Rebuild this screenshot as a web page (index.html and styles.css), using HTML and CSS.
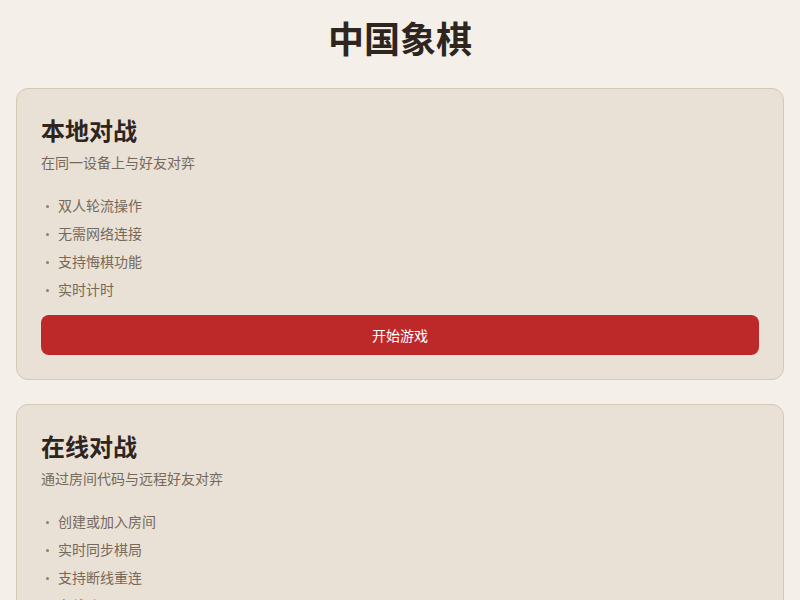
FILE: index.html
```html
<!DOCTYPE html>
<html lang="zh-CN">
<head>
    <meta charset="UTF-8">
    <meta name="viewport" content="width=device-width, initial-scale=1.0">
    <title>中国象棋</title>
    <link rel="stylesheet" href="styles.css">
</head>
<body>
    <div class="page">
        <h1 class="page-title">中国象棋</h1>

        <div class="mode-card">
            <h2 class="mode-title">本地对战</h2>
            <p class="mode-desc">在同一设备上与好友对弈</p>
            <ul class="mode-features">
                <li>双人轮流操作</li>
                <li>无需网络连接</li>
                <li>支持悔棋功能</li>
                <li>实时计时</li>
            </ul>
            <button class="start-button">开始游戏</button>
        </div>

        <div class="mode-card">
            <h2 class="mode-title">在线对战</h2>
            <p class="mode-desc">通过房间代码与远程好友对弈</p>
            <ul class="mode-features">
                <li>创建或加入房间</li>
                <li>实时同步棋局</li>
                <li>支持断线重连</li>
                <li>在线聊天</li>
            </ul>
            <button class="start-button">开始游戏</button>
        </div>
    </div>
</body>
</html>
```

FILE: styles.css
```css
body {
    margin: 0;
    padding: 0;
    font-family: "Noto Sans", "Noto Sans CJK SC", sans-serif;
    background-color: #f4f0e9;
    color: #2e251f;
}

.page {
    padding: 16px;
    display: flex;
    flex-direction: column;
    gap: 24px;
}

.page-title {
    margin: 0;
    font-size: 36px;
    line-height: 48px;
    font-weight: bold;
    text-align: center;
    color: #2e251f;
}

.mode-card {
    padding: 24px;
    background-color: #e9e1d5;
    border: 1px solid #d5c8b4;
    border-radius: 12px;
    display: flex;
    flex-direction: column;
}

.mode-title {
    margin: 0 0 3px;
    font-size: 24px;
    line-height: 36px;
    font-weight: bold;
    color: #2e251f;
}

.mode-desc {
    margin: 0;
    font-size: 14px;
    line-height: 21px;
    color: #76695c;
}

.mode-features {
    list-style: none;
    margin: 19px 0 0;
    padding: 0;
}

.mode-features li {
    position: relative;
    padding-left: 17px;
    font-size: 14px;
    line-height: 28px;
    color: #76695c;
}

.mode-features li::before {
    content: "";
    position: absolute;
    left: 5px;
    top: 13px;
    width: 3px;
    height: 3px;
    border-radius: 50%;
    background-color: #8c7e70;
}

.start-button {
    margin-top: 11px;
    height: 40px;
    border: none;
    border-radius: 8px;
    background-color: #bd2828;
    color: #fff;
    font-family: inherit;
    font-size: 14px;
    cursor: pointer;
}
```
